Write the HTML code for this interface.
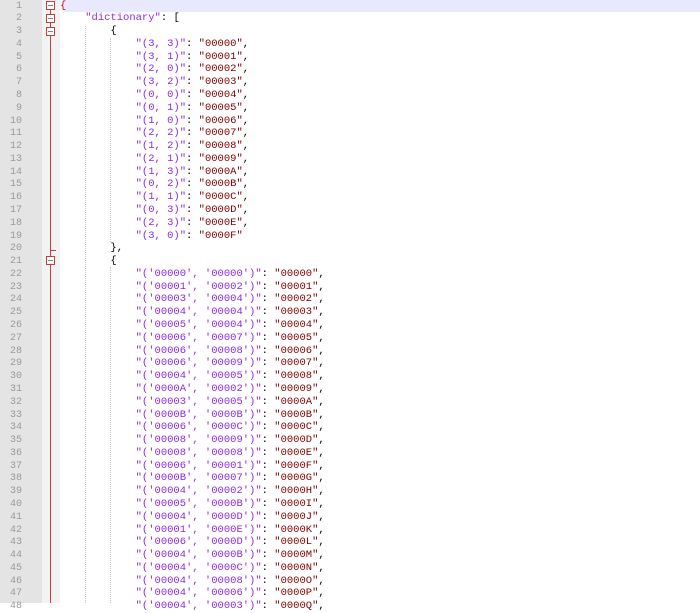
<!DOCTYPE html><html><head><style>
body{margin:0;width:700px;height:603px;overflow:hidden;background:#fff;position:relative;font-family:"Liberation Mono",monospace;font-size:10.5px}
#g{position:absolute;left:0;top:0;width:42px;height:603px;background:#e4e4e4}
#f{position:absolute;left:42px;top:0;width:18px;height:603px;background:#f3f3f3}
#hl{position:absolute;left:64px;top:0;width:636px;height:12px;background:#e8e8ff}
.n{position:absolute;left:0;width:22px;text-align:right;color:#9a9a9a;font-size:10px;line-height:13px}
.l{position:absolute;left:60px;white-space:pre;line-height:13px;color:#000}
.k{color:#8a2be2}.v{color:#800000}
.bx{position:absolute;left:46px;width:9px;height:9px;border:1px solid #c04040;background:#fff;box-sizing:border-box}
.bx:after{content:"";position:absolute;left:1px;right:1px;top:3px;height:1px;background:#808080}
.rl{position:absolute;left:50px;width:1px;background:#c04040}
.ig{position:absolute;width:0;border-left:1px dotted #c8c8c8}
</style></head><body>
<div id="g"></div><div id="f"></div><div id="hl"></div>
<div class="rl" style="top:5px;height:598px"></div>
<div class="bx" style="top:1px"></div><div class="bx" style="top:14px"></div><div class="bx" style="top:27px"></div><div class="bx" style="top:256px"></div>
<div style="position:absolute;left:51px;top:250px;width:5px;height:1px;background:#c04040"></div>
<div class="ig" style="left:85px;top:26px;height:577px"></div>
<div class="ig" style="left:110px;top:38px;height:204px"></div>
<div class="ig" style="left:110px;top:267px;height:336px"></div>
<div id="c"></div>
<script>
var L=['<span style="color:#c00000">{</span>','    <span class="k">"dictionary"</span>: [','        {'];
var a=[["(3, 3)","00000"],["(3, 1)","00001"],["(2, 0)","00002"],["(3, 2)","00003"],["(0, 0)","00004"],["(0, 1)","00005"],["(1, 0)","00006"],["(2, 2)","00007"],["(1, 2)","00008"],["(2, 1)","00009"],["(1, 3)","0000A"],["(0, 2)","0000B"],["(1, 1)","0000C"],["(0, 3)","0000D"],["(2, 3)","0000E"],["(3, 0)","0000F"]];
a.forEach(function(p,i){L.push('            <span class="k">"'+p[0]+'"</span>: <span class="v">"'+p[1]+'"</span>'+(i<15?',':''))});
L.push('        },');L.push('        {');
var b=[["00000","00000"],["00001","00002"],["00003","00004"],["00004","00004"],["00005","00004"],["00006","00007"],["00006","00008"],["00006","00009"],["00004","00005"],["0000A","00002"],["00003","00005"],["0000B","0000B"],["00006","0000C"],["00008","00009"],["00008","00008"],["00006","00001"],["0000B","00007"],["00004","00002"],["00005","0000B"],["00004","0000D"],["00001","0000E"],["00006","0000D"],["00004","0000B"],["00004","0000C"],["00004","00008"],["00004","00006"],["00004","00003"]];
var vs="0123456789ABCDEFGHIJKLMNOPQ";
b.forEach(function(p,i){L.push('            <span class="k">"(\''+p[0]+'\', \''+p[1]+'\')"</span>: <span class="v">"0000'+vs[i]+'"</span>,')});
var h='';
L.forEach(function(s,i){var t=(i*12.78-0.5).toFixed(1);h+='<div class="n" style="top:'+t+'px">'+(i+1)+'</div><div class="l" style="top:'+t+'px">'+s+'</div>'});
document.getElementById('c').innerHTML=h;
</script>
</body></html>
